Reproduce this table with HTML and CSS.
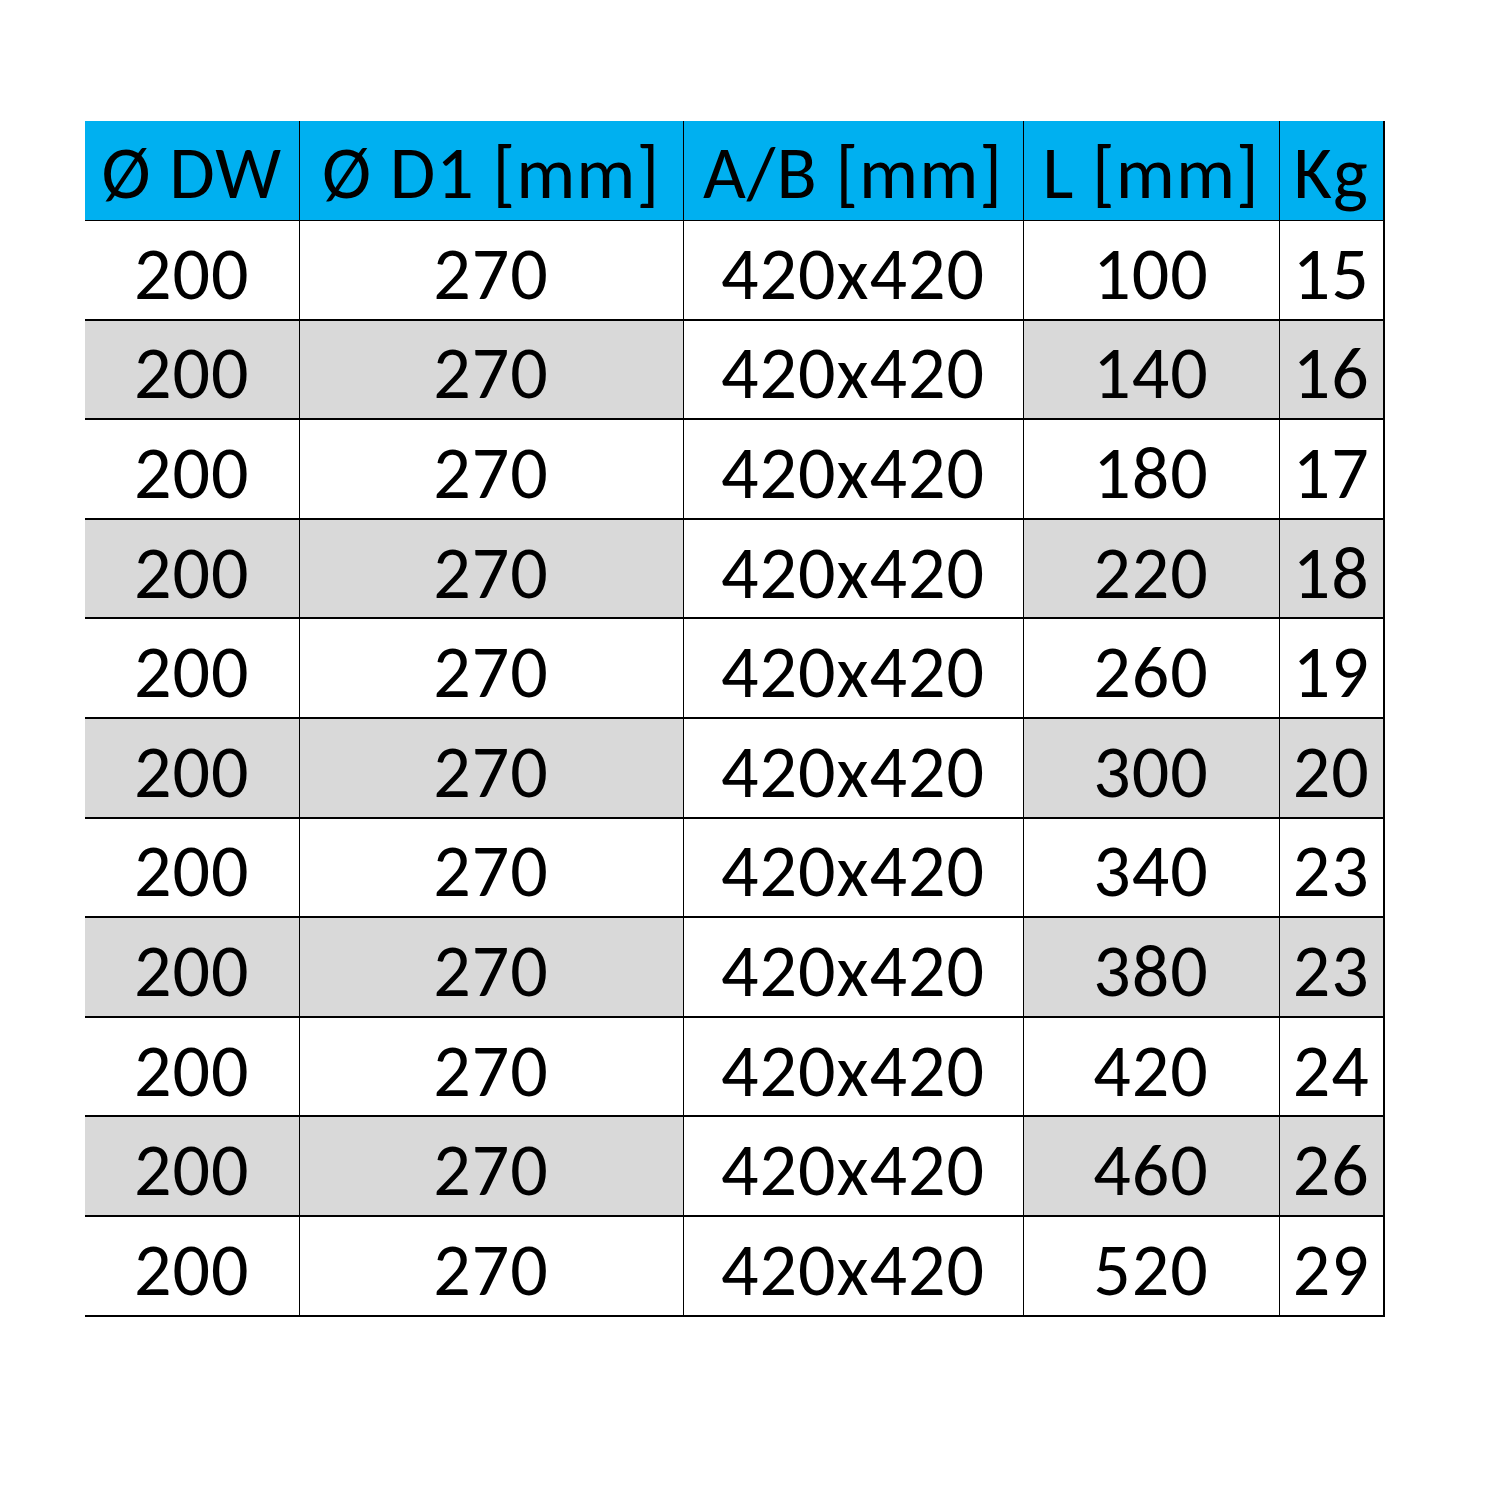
FILE: index.html
```html
<!DOCTYPE html>
<html lang="de">
<head>
    <meta charset="UTF-8">
    <title>Abmessungen</title>
    <link rel="stylesheet" href="styles.css">
</head>
<body>
    <table class="spec-table">
        <colgroup>
            <col class="col-dw">
            <col class="col-d1">
            <col class="col-ab">
            <col class="col-l">
            <col class="col-kg">
        </colgroup>
        <thead>
            <tr>
                <th>Ø DW</th>
                <th>Ø D1 [mm]</th>
                <th>A/B [mm]</th>
                <th>L [mm]</th>
                <th>Kg</th>
            </tr>
        </thead>
        <tbody>
            <tr><td>200</td><td>270</td><td class="ab">420x420</td><td>100</td><td>15</td></tr>
            <tr class="shade"><td>200</td><td>270</td><td class="ab">420x420</td><td>140</td><td>16</td></tr>
            <tr><td>200</td><td>270</td><td class="ab">420x420</td><td>180</td><td>17</td></tr>
            <tr class="shade"><td>200</td><td>270</td><td class="ab">420x420</td><td>220</td><td>18</td></tr>
            <tr><td>200</td><td>270</td><td class="ab">420x420</td><td>260</td><td>19</td></tr>
            <tr class="shade"><td>200</td><td>270</td><td class="ab">420x420</td><td>300</td><td>20</td></tr>
            <tr><td>200</td><td>270</td><td class="ab">420x420</td><td>340</td><td>23</td></tr>
            <tr class="shade"><td>200</td><td>270</td><td class="ab">420x420</td><td>380</td><td>23</td></tr>
            <tr><td>200</td><td>270</td><td class="ab">420x420</td><td>420</td><td>24</td></tr>
            <tr class="shade"><td>200</td><td>270</td><td class="ab">420x420</td><td>460</td><td>26</td></tr>
            <tr><td>200</td><td>270</td><td class="ab">420x420</td><td>520</td><td>29</td></tr>
        </tbody>
    </table>
</body>
</html>
```

FILE: styles.css
```css
body {
    margin: 0;
    padding: 121px 0 0 85px;
    background-color: #ffffff;
    font-family: Carlito, Calibri, Lato, "Open Sans", sans-serif;
    color: #000000;
}
.spec-table {
    border-collapse: collapse;
    table-layout: fixed;
    width: 1299px;
}
.col-dw { width: 214px; }
.col-d1 { width: 384px; }
.col-ab { width: 340px; }
.col-l { width: 256px; }
.col-kg { width: 105px; }

.spec-table th,
.spec-table td {
    padding: 0;
    text-align: center;
    font-size: 74px;
    font-weight: normal;
    line-height: 1;
    letter-spacing: 1px;
    border-left: 1px solid #000;
    box-sizing: border-box;
}
.spec-table th:first-child,
.spec-table td:first-child {
    border-left: none;
}
.spec-table th:last-child,
.spec-table td:last-child {
    border-right: 2px solid #000;
}
.spec-table th {
    height: 99px;
    padding-top: 6px;
    background-color: #00b0f0;
    border-bottom: 1px solid #000;
}
.spec-table td {
    height: 99.6px;
    padding-top: 8px;
    border-bottom: 2px solid #000;
}
.shade td {
    background-color: #d9d9d9;
}
.shade td.ab {
    background-color: #ffffff;
}
```
